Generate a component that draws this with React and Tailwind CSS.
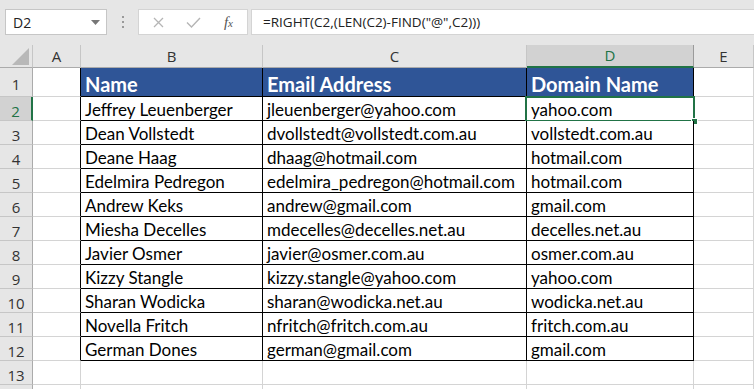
import React from "react";

const rows = [
  ["Jeffrey Leuenberger", "jleuenberger@yahoo.com", "yahoo.com"],
  ["Dean Vollstedt", "dvollstedt@vollstedt.com.au", "vollstedt.com.au"],
  ["Deane Haag", "dhaag@hotmail.com", "hotmail.com"],
  ["Edelmira Pedregon", "edelmira_pedregon@hotmail.com", "hotmail.com"],
  ["Andrew Keks", "andrew@gmail.com", "gmail.com"],
  ["Miesha Decelles", "mdecelles@decelles.net.au", "decelles.net.au"],
  ["Javier Osmer", "javier@osmer.com.au", "osmer.com.au"],
  ["Kizzy Stangle", "kizzy.stangle@yahoo.com", "yahoo.com"],
  ["Sharan Wodicka", "sharan@wodicka.net.au", "wodicka.net.au"],
  ["Novella Fritch", "nfritch@fritch.com.au", "fritch.com.au"],
  ["German Dones", "german@gmail.com", "gmail.com"],
];

const cellFont = { fontFamily: "Lato, 'Liberation Sans', sans-serif" };
const uiFont = { fontFamily: "'Segoe UI', 'Open Sans', sans-serif" };

function Toolbar() {
  return (
    <div className="h-[45px] bg-[#e6e6e6] flex items-start pt-[9px] pl-[5px]">
      <div className="w-[102px] h-[26px] bg-white border border-[#c6c6c6] flex items-center justify-between pl-[7px] pr-[6px]">
        <span className="text-[14px] text-[#222]" style={uiFont}>D2</span>
        <svg width="9" height="5" viewBox="0 0 9 5"><path d="M0 0h9L4.5 5z" fill="#777" /></svg>
      </div>
      <div className="w-[31px] h-[26px] flex flex-col items-center justify-center gap-[3px]">
        <span className="w-[2px] h-[2px] bg-[#999]" />
        <span className="w-[2px] h-[2px] bg-[#999]" />
        <span className="w-[2px] h-[2px] bg-[#999]" />
      </div>
      <div className="w-[110px] h-[26px] bg-white border border-[#d4d4d4] flex items-center justify-between px-[14px]">
        <svg width="11" height="11" viewBox="0 0 11 11"><path d="M1 1l9 9M10 1l-9 9" stroke="#b5b5b5" strokeWidth="1.3" /></svg>
        <svg width="15" height="11" viewBox="0 0 15 11"><path d="M1 5.5l4.5 4.5L14 1" stroke="#b5b5b5" strokeWidth="1.4" fill="none" /></svg>
        <span className="text-[15px] italic text-[#555] leading-none" style={{ fontFamily: "'Liberation Serif', serif" }}>
          f<span className="text-[11px]">x</span>
        </span>
      </div>
      <div className="ml-[3px] flex-1 h-[26px] bg-white border border-[#d4d4d4] border-r-0 flex items-center pl-[11px]">
        <span className="text-[13.5px] text-[#222]" style={uiFont}>
          =RIGHT(C2,(LEN(C2)-FIND("@",C2)))
        </span>
      </div>
    </div>
  );
}

function ColHeader({ label, selected, first }) {
  return (
    <div
      className={`h-[23px] flex items-center justify-center text-[15px] border-r ${
        selected
          ? "bg-[#d2d2d2] text-[#217346] border-r-[#9b9b9b] border-b-2 border-b-[#217346]"
          : "bg-[#e6e6e6] text-[#333] border-r-[#c6c6c6] border-b border-b-[#ababab]"
      }`}
      style={uiFont}
    >
      {first ? (
        <div className="w-full h-full flex items-end justify-end pr-[3px] pb-[2px]">
          <svg width="17" height="17" viewBox="0 0 17 17"><path d="M17 0V17H0z" fill="#b8b8b8" /></svg>
        </div>
      ) : (
        label
      )}
    </div>
  );
}

function RowHeader({ n, selected, h }) {
  return (
    <div
      className={`flex items-center justify-center pt-[5px] text-[15px] border-b ${
        selected
          ? "bg-[#d2d2d2] text-[#217346] border-r-2 border-r-[#217346] border-b-[#c6c6c6]"
          : "bg-[#e6e6e6] text-[#333] border-r border-r-[#ababab] border-b-[#c6c6c6]"
      } ${h}`}
      style={uiFont}
    >
      {n}
    </div>
  );
}

export default function App() {
  const gridRows = [];
  gridRows.push(
    <React.Fragment key="r1">
      <RowHeader n={1} h="h-[29px]" />
      <div className="h-[29px] bg-white border-r border-r-black border-b border-b-[#d4d4d4]" />
      {["Name", "Email Address", "Domain Name"].map((t) => (
        <div
          key={t}
          className="h-[29px] bg-[#2f5597] border-r border-b border-black flex items-end pl-[4px] pb-[1px] text-white font-bold text-[20px] leading-[21px] whitespace-nowrap"
          style={cellFont}
        >
          {t}
        </div>
      ))}
      <div className="h-[29px] bg-white border-r border-b border-[#d4d4d4]" />
    </React.Fragment>
  );
  rows.forEach((r, i) => {
    const n = i + 2;
    gridRows.push(
      <React.Fragment key={n}>
        <RowHeader n={n} selected={n === 2} h="h-[24px]" />
        <div className="h-[24px] bg-white border-r border-r-black border-b border-b-[#d4d4d4]" />
        {r.map((t, j) => (
          <div
            key={j}
            className="relative h-[24px] bg-white border-r border-b border-black flex items-end pl-[4px] pb-[1px] text-[17px] leading-[18px] text-black whitespace-nowrap"
            style={cellFont}
          >
            {t}
            {n === 2 && j === 2 && (
              <div className="absolute left-[-2px] top-[-1px] right-[-2px] bottom-[-2px] border-2 border-[#217346]">
                <div className="absolute right-[-5px] bottom-[-5px] w-[7px] h-[7px] bg-[#217346] border border-white" />
              </div>
            )}
          </div>
        ))}
        <div className="h-[24px] bg-white border-r border-b border-[#d4d4d4]" />
      </React.Fragment>
    );
  });
  [13, 14].forEach((n) => {
    gridRows.push(
      <React.Fragment key={n}>
        <RowHeader n={n === 13 ? n : ""} h="h-[24px]" />
        {[0, 1, 2, 3, 4].map((j) => (
          <div key={j} className="h-[24px] bg-white border-r border-b border-[#d4d4d4]" />
        ))}
      </React.Fragment>
    );
  });

  return (
    <div className="w-[754px] h-[389px] overflow-hidden bg-white">
      <Toolbar />
      <div className="grid grid-cols-[33px_48px_182px_264px_167px_60px]">
        <ColHeader first />
        <ColHeader label="A" />
        <ColHeader label="B" />
        <ColHeader label="C" />
        <ColHeader label="D" selected />
        <ColHeader label="E" />
        {gridRows}
      </div>
    </div>
  );
}
